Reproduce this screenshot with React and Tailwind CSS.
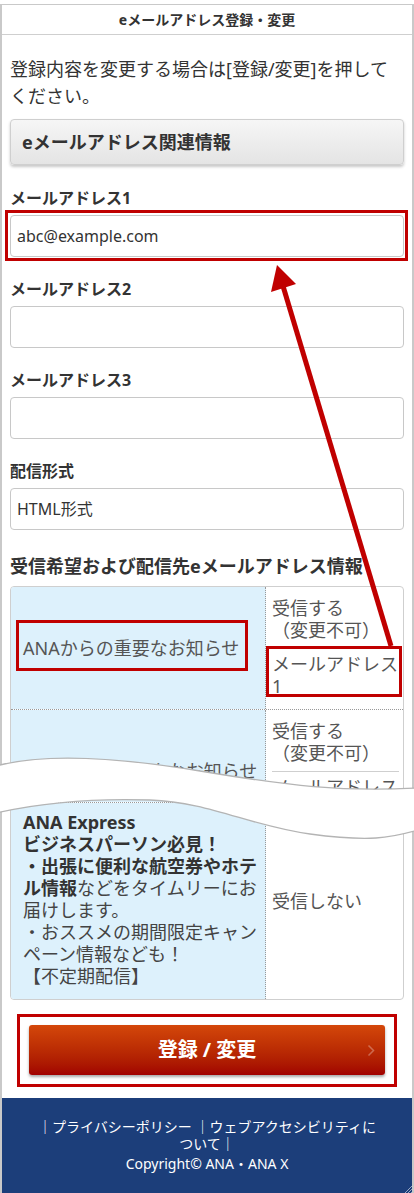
import React from 'react';

const FONT = { fontFamily: '"Noto Sans", "Noto Sans CJK JP", sans-serif' };

const Field = ({ label, value, first, marked }) => (
  <div className={first ? 'mt-[22px]' : 'mt-[21px]'}>
    <p className="text-[16px] leading-[22px] font-bold text-[#333]">{label}</p>
    <div className="relative mt-[6px]">
      <input
        readOnly
        value={value}
        className="block h-[42px] w-full rounded-[4px] border border-[#c8c8c8] bg-white px-[6px] text-[16px] text-[#333] outline-none"
      />
      {marked && (
        <span className="absolute -left-[5px] -right-[4px] -top-[5px] -bottom-[4px] border-[3px] border-[#c00000]" />
      )}
    </div>
  </div>
);

// right column: receive setting + delivery address
const ReceiveCell = ({ marked }) => (
  <div className="whitespace-nowrap pl-[6px] pr-[4px] pt-[10px] pb-[12px] text-[18px] leading-[22px] text-[#555]">
    <div>
      受信する
      <br />
      （変更不可）
    </div>
    <div className="relative mt-[7px] border-t border-[#cfcfcf] pt-[4px]">
      メールアドレス
      <br />1
      {marked && (
        <span className="absolute -left-[6px] -right-[3px] -top-[3px] bottom-0 border-[3px] border-[#c00000]" />
      )}
    </div>
  </div>
);

const Overlay = () => (
  <svg
    className="pointer-events-none absolute left-0 top-0 overflow-visible"
    width="414"
    height="1193"
    viewBox="0 0 414 1193"
  >
    {/* annotation arrow */}
    <line x1="391" y1="646" x2="283" y2="286" stroke="#c00000" strokeWidth="5" />
    <polygon points="277,265 271,292 296,284" fill="#c00000" />
    {/* torn-out section */}
    <path
      d="M -4 766 C 40 754 110 756 200 771 C 290 786 340 792 418 788 L 418 830 C 390 838 370 842 310 834 C 250 826 210 802 150 800 C 90 798 40 803 -4 813 Z"
      fill="#fff"
    />
    <path d="M -4 766 C 40 754 110 756 200 771 C 290 786 340 792 418 788" fill="none" stroke="#b4b4b4" strokeWidth="1.3" />
    <path d="M -4 813 C 40 803 90 798 150 800 C 210 802 250 826 310 834 C 370 842 390 838 418 830" fill="none" stroke="#b4b4b4" strokeWidth="1.3" />
  </svg>
);

export default function App() {
  return (
    <div className="relative min-h-screen bg-white pt-[4px]" style={FONT}>
      <div className="border-x-2 border-t border-[#c9c9c9]">
        <header className="flex h-[30px] items-center justify-center border-b border-[#cfcfcf] text-[14px] font-bold text-[#333]">
          eメールアドレス登録・変更
        </header>

        <main className="px-[8px]">
          <p className="pt-[21px] text-[18px] leading-[27px] text-[#333]">
            登録内容を変更する場合は[登録/変更]を押してください。
          </p>

          <div className="mt-[9px] flex h-[46px] items-center rounded-[4px] border border-[#cfcfcf] bg-linear-to-b from-[#f6f6f6] to-[#e4e4e4] pl-[11px] text-[18px] font-bold text-[#333] shadow-[0_2px_3px_rgba(0,0,0,0.22)]">
            eメールアドレス関連情報
          </div>

          <Field label="メールアドレス1" value="abc@example.com" first marked />
          <Field label="メールアドレス2" value="" />
          <Field label="メールアドレス3" value="" />

          <div className="mt-[21px]">
            <p className="text-[16px] leading-[22px] font-bold text-[#333]">配信形式</p>
            <div className="mt-[6px] flex h-[42px] items-center rounded-[4px] border border-[#c8c8c8] px-[6px] text-[16px] text-[#333]">
              HTML形式
            </div>
          </div>

          <h2 className="mt-[24px] text-[18px] leading-[24px] font-bold text-[#333]">
            受信希望および配信先eメールアドレス情報
          </h2>

          <div className="mt-[8px] overflow-hidden rounded-[4px] border border-[#cfcfcf]">
            <div className="grid grid-cols-[255px_1fr] border-b border-dotted border-[#999]">
              <div className="flex items-center border-r border-dotted border-[#999] bg-[#ddf1fc] pl-[12px] text-[18px] leading-[22px] text-[#555]">
                <span className="relative inline-block">
                  ANAからの重要なお知らせ
                  <span className="absolute -left-[7px] -right-[9px] -top-[17px] -bottom-[12px] border-[3px] border-[#c00000]" />
                </span>
              </div>
              <ReceiveCell marked />
            </div>

            <div className="h-[93px] overflow-hidden border-b border-dotted border-[#999]">
              <div className="grid grid-cols-[255px_1fr]">
                <div className="flex items-center whitespace-nowrap border-r border-dotted border-[#999] bg-[#ddf1fc] pl-[12px] text-[18px] leading-[22px] text-[#555]">
                  ANAからのおトクなお知らせ
                </div>
                <ReceiveCell />
              </div>
            </div>

            <div className="grid grid-cols-[255px_1fr]">
              <div className="whitespace-nowrap border-r border-dotted border-[#999] bg-[#ddf1fc] pl-[12px] pt-[8px] pb-[12px] text-[18px] leading-[22px] text-[#444]">
                <b className="text-[#333]">ANA Express</b>
                <br />
                <b className="text-[#333]">ビジネスパーソン必見！</b>
                <br />
                <b className="text-[#333]">・出張に便利な航空券やホテ</b>
                <br />
                <b className="text-[#333]">ル情報</b>などをタイムリーにお
                <br />
                届けします。
                <br />
                ・おススメの期間限定キャン
                <br />
                ペーン情報なども！
                <br />
                【不定期配信】
              </div>
              <div className="flex items-center px-[6px] text-[18px] leading-[22px] text-[#555]">
                受信しない
              </div>
            </div>
          </div>

          <div className="mx-[7px] mt-[14px] border-[3px] border-[#c00000] px-[9px] pt-[8px] pb-[9px]">
            <button className="relative flex h-[50px] w-full items-center justify-center rounded-[3px] bg-linear-to-b from-[#d4470a] to-[#a10000] text-[20px] font-bold text-white shadow-[0_2px_3px_rgba(0,0,0,0.35)]">
              登録 / 変更
              <svg className="absolute right-[10px] top-[19px]" width="8" height="13" viewBox="0 0 8 13">
                <path d="M1.5 1.5 L6.5 6.5 L1.5 11.5" fill="none" stroke="rgba(255,255,255,0.3)" strokeWidth="1.5" />
              </svg>
            </button>
          </div>
        </main>

        <footer className="relative mt-[11px] h-[97px] bg-[#1c3e7a] pt-[20px] text-center text-[14px] text-white">
          <p className="leading-[17px]">
            ｜プライバシーポリシー ｜ウェブアクセシビリティに
            <br />
            ついて｜
          </p>
          <p className="mt-[3px] leading-[17px]">Copyright© ANA・ANA X</p>
          <svg className="absolute bottom-0 right-0" width="11" height="11" viewBox="0 0 11 11">
            <path d="M11 2 L2 11 M11 5 L5 11 M11 8 L8 11" stroke="#9aa8c4" strokeWidth="1" />
          </svg>
        </footer>
      </div>
      <Overlay />
    </div>
  );
}
